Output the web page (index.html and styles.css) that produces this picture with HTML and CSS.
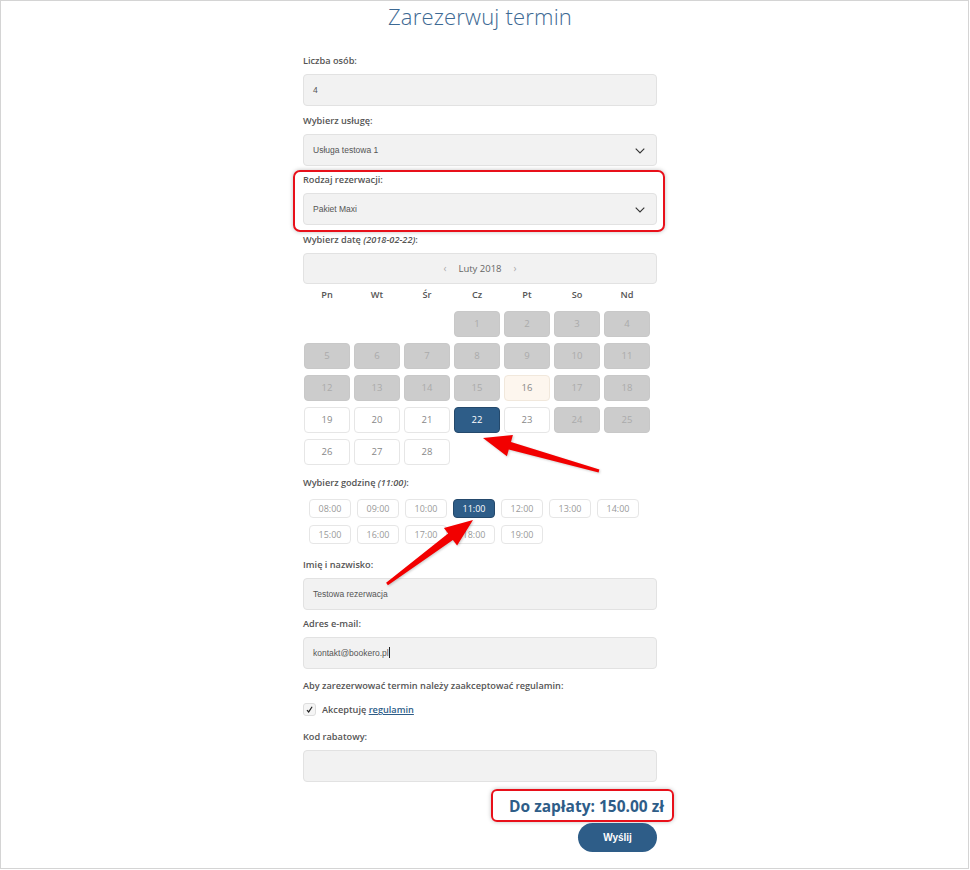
FILE: index.html
```html
<!DOCTYPE html>
<html lang="pl">
<head>
  <meta charset="utf-8">
  <meta name="viewport" content="width=device-width, initial-scale=1.0">
  <link rel="stylesheet" href="styles.css">
</head>
<body>

<div class="frame">
  <div class="booking">
    <h1>Zarezerwuj termin</h1>

    <div class="field">
      <label>Liczba osób:</label>
      <div class="input">4</div>
    </div>

    <div class="field">
      <label>Wybierz usługę:</label>
      <div class="input select">Usługa testowa 1
        <svg class="chevron" viewBox="0 0 10 6" width="10" height="6"><path d="M0.7 0.7l4.3 4.3 4.3-4.3" fill="none" stroke="#333" stroke-width="1.1"/></svg>
      </div>
    </div>

    <div class="field marked">
      <label>Rodzaj rezerwacji:</label>
      <div class="input select">Pakiet Maxi
        <svg class="chevron" viewBox="0 0 10 6" width="10" height="6"><path d="M0.7 0.7l4.3 4.3 4.3-4.3" fill="none" stroke="#333" stroke-width="1.1"/></svg>
      </div>
    </div>

    <div class="field">
      <label>Wybierz datę <em>(2018-02-22)</em>:</label>
      <div class="cal-head">
        <span class="nav">‹</span>
        <span>Luty 2018</span>
        <span class="nav">›</span>
      </div>
      <div class="cal">
        <div class="wd">Pn</div><div class="wd">Wt</div><div class="wd">Śr</div><div class="wd">Cz</div>
        <div class="wd">Pt</div><div class="wd">So</div><div class="wd">Nd</div>

        <div class="empty"></div><div class="empty"></div><div class="empty"></div>
        <div class="day off">1</div><div class="day off">2</div><div class="day off">3</div><div class="day off">4</div>

        <div class="day off">5</div><div class="day off">6</div><div class="day off">7</div><div class="day off">8</div>
        <div class="day off">9</div><div class="day off">10</div><div class="day off">11</div>

        <div class="day off">12</div><div class="day off">13</div><div class="day off">14</div><div class="day off">15</div>
        <div class="day today">16</div><div class="day off">17</div><div class="day off">18</div>

        <div class="day">19</div><div class="day">20</div><div class="day">21</div><div class="day active">22</div>
        <div class="day">23</div><div class="day off">24</div><div class="day off">25</div>

        <div class="day">26</div><div class="day">27</div><div class="day">28</div>
      </div>
    </div>

    <div class="field">
      <label>Wybierz godzinę <em>(11:00)</em>:</label>
      <div class="hours">
        <div class="hour">08:00</div><div class="hour">09:00</div><div class="hour">10:00</div>
        <div class="hour active">11:00</div><div class="hour">12:00</div><div class="hour">13:00</div>
        <div class="hour">14:00</div><div class="hour">15:00</div><div class="hour">16:00</div>
        <div class="hour">17:00</div><div class="hour">18:00</div><div class="hour">19:00</div>
      </div>
    </div>

    <div class="field">
      <label>Imię i nazwisko:</label>
      <div class="input">Testowa rezerwacja</div>
    </div>

    <div class="field">
      <label>Adres e-mail:</label>
      <div class="input">kontakt@bookero.pl<span class="caret"></span></div>
    </div>

    <div class="field terms">
      <label>Aby zarezerwować termin należy zaakceptować regulamin:</label>
      <div class="accept">
        <span class="check">
          <svg viewBox="0 0 10 10" width="9" height="9"><path d="M2.2 5.6l1.9 2.1L7.9 2" fill="none" stroke="#222" stroke-width="1.3"/></svg>
        </span>
        <span>Akceptuję <a href="#">regulamin</a></span>
      </div>
    </div>

    <div class="field">
      <label>Kod rabatowy:</label>
      <div class="input"></div>
    </div>

    <div class="summary">
      <div class="total">Do zapłaty: 150.00 zł</div>
      <button class="send">Wyślij</button>
    </div>
  </div>

  <svg class="arrows" viewBox="0 0 969 869" width="969" height="869">
    <polygon points="482,437 511.9,434.1 510,440.9 598.4,468.6 597.6,471.4 507.8,448.5 505.9,455.3" fill="#f20000"/>
    <polygon points="472,519 442.9,526.9 447.1,532.5 385.1,581.8 386.9,584.2 451.9,538.9 456.1,544.5" fill="#f20000"/>
  </svg>
</div>

</body>
</html>
```

FILE: styles.css
```css
  body {
    margin: 0;
    background: #fff;
    font-family: 'Open Sans', sans-serif;
    color: #555;
  }

  .frame {
    position: relative;
    width: 967px;
    height: 867px;
    border: 1px solid #d4d4d4;
    overflow: hidden;
  }

  .booking {
    width: 354px;
    margin-left: 302px;
  }

  h1 {
    margin: 0 0 23px;
    font-weight: 300;
    font-size: 22px;
    line-height: 30px;
    color: #3d6993;
    text-align: center;
    letter-spacing: 0.2px;
  }

  .field {
    margin-bottom: 7.5px;
  }

  label {
    display: block;
    font-size: 9.2px;
    font-weight: 600;
    line-height: 14px;
    color: #555;
    margin-bottom: 6px;
  }

  label em {
    font-style: italic;
  }

  .input {
    position: relative;
    height: 32px;
    box-sizing: border-box;
    padding: 0 9px;
    background: #f2f2f2;
    border: 1px solid #e2e2e2;
    border-radius: 4px;
    font-family: 'Liberation Sans', Arial, sans-serif;
    font-size: 8.5px;
    line-height: 30px;
    color: #555;
  }

  .chevron {
    position: absolute;
    right: 11px;
    top: 13px;
  }

  .caret {
    display: inline-block;
    width: 1px;
    height: 11px;
    background: #222;
    vertical-align: -2px;
  }

  /* annotation box */
  .marked {
    position: relative;
  }

  .marked::after {
    content: "";
    position: absolute;
    left: -10px;
    right: -8px;
    top: -3px;
    bottom: -7px;
    border: 2px solid #e8101a;
    border-radius: 7px;
    box-shadow: 0 0 4px rgba(0, 0, 0, 0.25);
  }

  .cal-head {
    height: 31px;
    box-sizing: border-box;
    background: #f2f2f2;
    border: 1px solid #e2e2e2;
    border-radius: 4px;
    display: flex;
    align-items: center;
    justify-content: center;
    gap: 10px;
    font-size: 9.5px;
    color: #666;
  }

  .cal-head .nav {
    color: #aaa;
    font-size: 10px;
    margin: 0 2px;
  }

  .cal {
    display: grid;
    grid-template-columns: repeat(7, 46px);
    grid-template-rows: 20px;
    grid-auto-rows: 26px;
    column-gap: 4px;
    row-gap: 6.1px;
    padding: 1px 0 4px 1px;
  }

  .wd {
    font-size: 9.2px;
    font-weight: 600;
    color: #555;
    text-align: center;
    line-height: 20px;
  }

  .day {
    box-sizing: border-box;
    border: 1px solid #e6e6e6;
    border-radius: 4px;
    background: #fff;
    font-size: 9.5px;
    color: #888;
    display: flex;
    align-items: center;
    justify-content: center;
  }

  .day.off {
    background: #cccccc;
    border-color: #c8c8c8;
    color: #aaa;
  }

  .day.today {
    background: #fdf6ee;
    border-color: #f1e8dc;
  }

  .day.active {
    background: #2e5d88;
    border-color: #24496c;
    color: #fff;
  }

  .hours {
    display: grid;
    grid-template-columns: repeat(7, 42px);
    grid-auto-rows: 19px;
    column-gap: 6px;
    row-gap: 7px;
    padding: 3px 0 6px 6px;
  }

  .hour {
    box-sizing: border-box;
    border: 1px solid #e6e6e6;
    border-radius: 4px;
    font-size: 9px;
    color: #999;
    display: flex;
    align-items: center;
    justify-content: center;
  }

  .hour.active {
    background: #2e5d88;
    border-color: #24496c;
    color: #fff;
  }

  .terms {
    margin-top: 10px;
  }

  .accept {
    display: flex;
    align-items: center;
    gap: 6px;
    font-size: 9.2px;
    font-weight: 600;
    color: #555;
    padding: 4px 0 6px;
  }

  .check {
    width: 13px;
    height: 13px;
    box-sizing: border-box;
    border: 1px solid #ddd;
    border-radius: 3px;
    background: #f5f5f5;
    display: flex;
    align-items: center;
    justify-content: center;
  }

  .accept a {
    color: #2e5d88;
    text-decoration: underline;
  }

  .summary {
    display: flex;
    flex-direction: column;
    align-items: flex-end;
  }

  .total {
    margin-right: -17px;
    padding: 4px 8px 3px 16px;
    border: 2px solid #e8101a;
    border-radius: 6px;
    box-shadow: 0 0 4px rgba(0, 0, 0, 0.25);
    font-size: 15.5px;
    font-weight: 700;
    color: #2e5d88;
    line-height: 22px;
  }

  .send {
    margin-top: 1px;
    width: 79px;
    height: 29px;
    border: none;
    border-radius: 15px;
    background: #2e5d88;
    color: #fff;
    font-family: 'Liberation Sans', Arial, sans-serif;
    font-size: 10px;
    font-weight: 700;
    cursor: pointer;
  }

  .arrows {
    position: absolute;
    left: 0;
    top: 0;
    pointer-events: none;
    filter: drop-shadow(1px 1px 1px rgba(0, 0, 0, 0.2));
  }
```
